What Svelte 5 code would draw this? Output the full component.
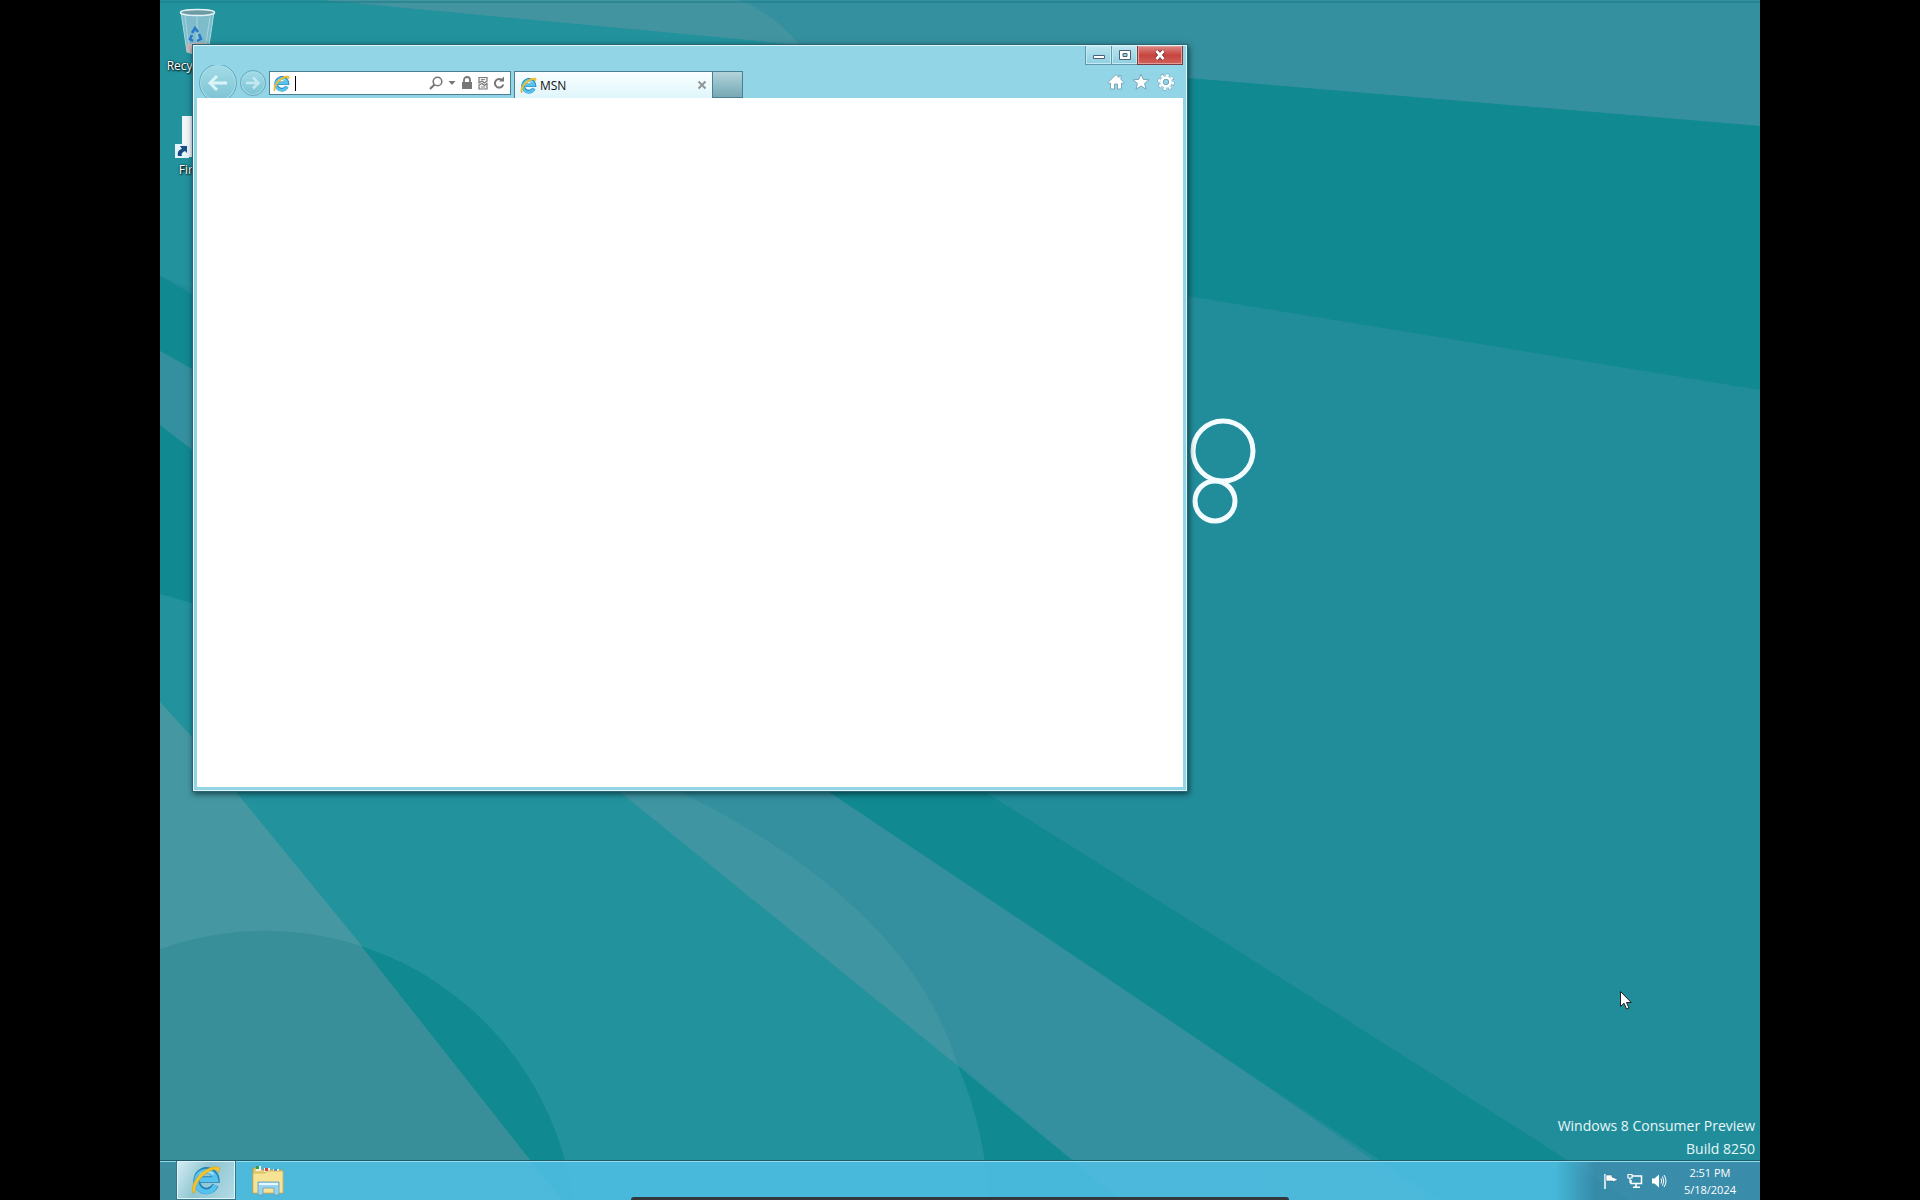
<script>
  let address = "";
  let tabs = ["MSN"];
  let time = "2:51 PM";
  let date = "5/18/2024";

  function closeTab(tab) {
    tabs = tabs.filter((t) => t !== tab);
  }

  function newTab() {
    tabs = [...tabs, "New tab"];
  }
</script>

{#snippet ieLogo()}
  <svg class="ie-logo" viewBox="0 0 32 32" aria-hidden="true">
    <path d="M26 21.500A10.500 11 0 1 1 27 15.500H9" fill="none" stroke="#2380b4" stroke-width="7" />
    <path d="M26 21.500A10.500 11 0 1 1 26.500 15.500H9" fill="none" stroke="#55c3ee" stroke-width="5" />
    <path d="M9 11A10 10 0 0 1 24 10" fill="none" stroke="#a9e7fa" stroke-width="2" />
    <path d="M2 30C-2 20 14 0 29 2C31 3 31 5 29 8C28 5 25 4 21 6C12 10 4 20 4 29Z" fill="#f5c52c" stroke="#c99513" stroke-width="0.500" />
  </svg>
{/snippet}

<main class="screen">
  <div class="desktop">
    <svg class="wallpaper" viewBox="0 0 1600 1200" preserveAspectRatio="none" aria-hidden="true">
      <rect width="1600" height="1200" fill="#228d9a" />
      <path d="M0 0H162L1000 76L600 500L0 276Z" fill="#22929d" />
      <path d="M162 0L375 20L1027 78L1600 126V0Z" fill="#34909e" />
      <path d="M162 0L375 20L640 45Q615 15 580 0Z" fill="#4294a0" />
      <path d="M1027 78L1600 126V390L1027 296L900 270V66Z" fill="#118990" />
      <path d="M0 276L32 294L400 500L825 792L1080 952L1340 1117L1470 1200H1280L1080 1068L669 792L32 369L0 351Z" fill="#118990" />
      <path d="M0 351L32 369L400 590L669 792L950 980L1080 1068L1270 1200H960L795 1062L460 792L32 450L0 425Z" fill="#34909e" />
      <path d="M0 425L32 450L460 792L795 1062L960 1200H0Z" fill="#22929d" />
      <path d="M0 425L32 450L300 680L0 594Z" fill="#118990" />
      <path d="M460 792H520Q750 905 798 1066Z" fill="#3f95a1" />
      <path d="M798 1066L960 1200H829Q825 1130 798 1066Z" fill="#118990" />
      <path d="M0 702L32 737L81 798L198 941L370 1160L402 1200H0Z" fill="#4598a2" />
      <path d="M201 946A311 311 0 0 1 413 1200H402L370 1160Z" fill="#118990" />
      <path d="M0 949A311 311 0 0 1 201 946L370 1160L402 1200H0Z" fill="#398f99" />
      <rect y="1" width="1600" height="2" fill="#1c7f88" opacity="0.600" />
      <g fill="none" stroke="#f3fdff" stroke-width="5">
        <circle cx="1063" cy="451" r="30" />
        <circle cx="1055" cy="501" r="20" />
      </g>
    </svg>

    <div class="shortcuts">
      <button class="shortcut">
        <svg viewBox="0 0 48 48" aria-hidden="true">
          <path d="M7 4L40 4L34 44Q24 48 13 44Z" fill="#7fbccb" stroke="#a9dce6" />
          <path d="M11 8L15 40M23 9L23 42M36 9L31 41" stroke="#c3e7ee" opacity="0.600" fill="none" />
          <path d="M18 25L21 20L24 24M25 26L27 31L23 33M19 33L16 31L18 27" stroke="#2a78cc" stroke-width="2.500" fill="none" />
          <path d="M12 37Q24 32 34 36L33 44Q24 48 13 44Z" fill="#c9b9b9" />
          <ellipse cx="23.500" cy="4.500" rx="17" ry="3" fill="#6d9ba5" stroke="#e4f4f6" stroke-width="1.500" />
        </svg>
        <span>Recycle Bin</span>
      </button>
      <button class="shortcut">
        <svg viewBox="0 0 48 48" aria-hidden="true">
          <path d="M8 4H38V45H8Z" fill="#f3f6f8" />
          <path d="M1 32H15V46H1Z" fill="#e6f3f8" />
          <path d="M4 44C3 39 6 37 8 37L6 34H13V41L11 39C8 40 7 42 8 44Z" fill="#164d87" />
        </svg>
        <span>Firefox</span>
      </button>
    </div>

    <section class="window" aria-label="MSN">
      <header>
        <div class="caption">
          <button aria-label="Minimize">
            <svg width="14" height="12" viewBox="0 0 14 12"><path d="M1.500 6.500H12.500V9.500H1.500Z" fill="#fff" stroke="#4d6078" /></svg>
          </button>
          <button aria-label="Maximize">
            <svg width="14" height="12" viewBox="0 0 14 12"><path d="M1.500 1.500H12.500V10.500H1.500Z" fill="#fff" stroke="#4d6078" /><path d="M5 4.500H9V7.500H5Z" fill="#91d5e6" stroke="#4d6078" /></svg>
          </button>
          <button class="close" aria-label="Close">
            <svg width="14" height="12" viewBox="0 0 14 12"><path d="M3.500 2L10.500 10M10.500 2L3.500 10" stroke="#6b2b30" stroke-width="4.500" /><path d="M3.500 2L10.500 10M10.500 2L3.500 10" stroke="#fff" stroke-width="2.800" /></svg>
          </button>
        </div>

        <div class="toolbar">
          <div class="history">
            <button class="back" aria-label="Back">
              <svg width="22" height="20" viewBox="0 0 22 20"><path d="M20 10H3M10 3L3 10L10 17" fill="none" stroke="#d9f3f9" stroke-width="3" /></svg>
            </button>
            <button class="forward" aria-label="Forward">
              <svg width="16" height="14" viewBox="0 0 16 14"><path d="M1 7H13M8 1.500L13.500 7L8 12.500" fill="none" stroke="#c3e9f2" stroke-width="2.500" /></svg>
            </button>
          </div>

          <div class="address">
            {@render ieLogo()}
            <span class="caret"></span>
            <input type="text" bind:value={address} aria-label="Address" />
            <button aria-label="Search">
              <svg width="14" height="14" viewBox="0 0 14 14"><circle cx="8.500" cy="5.500" r="4.300" fill="none" stroke="#777" stroke-width="1.600" /><path d="M5.500 8.500L1 13" stroke="#777" stroke-width="2.200" /></svg>
            </button>
            <button aria-label="Show address bar autocomplete">
              <svg width="8" height="4" viewBox="0 0 8 4"><path d="M0.500 0H7.500L4 4Z" fill="#777" /></svg>
            </button>
            <button aria-label="Security report">
              <svg width="12" height="14" viewBox="0 0 12 14"><path d="M3 7V4A3 3 0 0 1 9 4V7" fill="none" stroke="#777" stroke-width="1.800" /><path d="M1 6H11V13H1Z" fill="#777" /></svg>
            </button>
            <button aria-label="Compatibility view">
              <svg width="10" height="14" viewBox="0 0 10 14"><path d="M1 6V1.500H9V5L6.500 7L4 5L1 7ZM1 13V9L4 7.500L6.500 9.500L9 7.500V13Z" fill="#f4f4f4" stroke="#777" stroke-width="1.200" /><path d="M3 3.500H7M3 11H7" stroke="#888" /></svg>
            </button>
            <button aria-label="Refresh">
              <svg width="12" height="14" viewBox="0 0 12 14"><path d="M9.500 4.500A4.300 4.300 0 1 0 10.300 8.500" fill="none" stroke="#777" stroke-width="2" /><path d="M6 5.500H11V0.500Z" fill="#777" /></svg>
            </button>
          </div>

          <div class="tabs">
            {#each tabs as tab}
              <div class="tab">
                {@render ieLogo()}
                <span>{tab}</span>
                <button aria-label="Close tab" onclick={() => closeTab(tab)}>
                  <svg width="10" height="10" viewBox="0 0 10 10"><path d="M1.500 1.500L8.500 8.500M8.500 1.500L1.500 8.500" stroke="#909699" stroke-width="2" /></svg>
                </button>
              </div>
            {/each}
            <button class="new-tab" aria-label="New tab" onclick={newTab}></button>
          </div>

          <nav class="commands">
            <button aria-label="Home">
              <svg width="18" height="18" viewBox="0 0 18 18"><path d="M9 1.500L12 4.500V2.500H14V6.500L17 9.500L15.500 10.500L14.500 10V16H10.500V11H7.500V16H3.500V10L2.500 10.500L1 9.500Z" fill="#fff" stroke="#6b96aa" stroke-width="0.800" /></svg>
            </button>
            <button aria-label="Favorites">
              <svg width="18" height="18" viewBox="0 0 18 18"><path d="M9 1L11.200 6.400L17 6.800L12.500 10.500L14 16.200L9 13L4 16.200L5.500 10.500L1 6.800L6.800 6.400Z" fill="#fff" stroke="#6b96aa" stroke-width="0.800" /></svg>
            </button>
            <button aria-label="Tools">
              <svg width="18" height="18" viewBox="0 0 18 18">
                <circle cx="9" cy="9" r="6.800" fill="none" stroke="#6b96aa" stroke-width="3.600" stroke-dasharray="3 2.340" />
                <circle cx="9" cy="9" r="6.800" fill="none" stroke="#fff" stroke-width="2.600" stroke-dasharray="2.600 2.740" />
                <circle cx="9" cy="9" r="4.400" fill="none" stroke="#fff" stroke-width="2.800" />
                <circle cx="9" cy="9" r="2.700" fill="none" stroke="#6b96aa" stroke-width="0.800" />
              </svg>
            </button>
          </nav>
        </div>
      </header>
      <div class="page"></div>
    </section>

    <div class="watermark">
      <div>Windows 8 Consumer Preview</div>
      <div>Build 8250</div>
    </div>

    <svg class="cursor" width="12" height="19" viewBox="0 0 12 19" aria-hidden="true">
      <path d="M0.500 0.500V15.500L4 12.200L6.500 18L9 17L6.500 11.500H11.300Z" fill="#fff" stroke="#222" />
    </svg>

    <footer class="taskbar">
      <button class="task active" aria-label="Internet Explorer">
        {@render ieLogo()}
      </button>
      <button class="task" aria-label="File Explorer">
        <svg width="34" height="32" viewBox="0 0 34 32">
          <path d="M2 3H9L11 5H31V28H2Z" fill="#e9cd72" stroke="#b8964a" stroke-width="0.800" />
          <path d="M5 1H10V6H5ZM13 3H19V7H13ZM22 4H28V8H22Z" fill="#f6f3e4" />
          <path d="M5 1H8V4H5Z" fill="#2fa04b" /><path d="M14 3H17V6H14Z" fill="#d2473a" /><path d="M23 4H26V7H23Z" fill="#3a8fd0" />
          <path d="M2 8H14L17 6H32V28H2Z" fill="#f7e394" stroke="#cfae58" stroke-width="0.800" />
          <path d="M7 17H28V30H23V23H12V30H7Z" fill="#9ad3ee" stroke="#5b9fc4" stroke-width="0.800" />
          <path d="M8 19H27" stroke="#e8f8ff" stroke-width="2" />
        </svg>
      </button>
      <div class="tray">
        <button aria-label="Action Center">
          <svg width="16" height="16" viewBox="0 0 16 16"><path d="M2 1V16" stroke="#fff" stroke-width="1.500" /><path d="M3 2H9V4L15 6.500L10 9V8H3Z" fill="#fff" stroke="#25586b" stroke-width="0.500" /></svg>
        </button>
        <button aria-label="Network">
          <svg width="16" height="16" viewBox="0 0 16 16"><path d="M5 3H14.500V10.500H4V7" fill="none" stroke="#fff" stroke-width="1.500" /><path d="M9 10.500V14M6 14.300H13" stroke="#fff" stroke-width="1.500" /><path d="M1 1.500H5V5H1ZM3 5V10" fill="none" stroke="#fff" stroke-width="1.200" /></svg>
        </button>
        <button aria-label="Volume">
          <svg width="16" height="16" viewBox="0 0 16 16"><path d="M1 5.500H3.500L8 1.500V14.500L3.500 10.500H1Z" fill="#fff" /><path d="M10 5.500Q11.500 8 10 10.500M11.500 3.500Q14 8 11.500 12.500M13 2Q17 8 13 14" fill="none" stroke="#fff" /></svg>
        </button>
        <button class="clock">
          <span>{time}</span>
          <span>{date}</span>
        </button>
      </div>
      <span class="handle"></span>
    </footer>
  </div>
</main>

<style>
  :global(body) {
    background: #000;
  }

  .screen {
    display: flex;
    justify-content: center;
    height: 100vh;
    background: #000;
    font-family: "Open Sans", "Noto Sans", sans-serif;
    font-size: 12px;
    overflow: hidden;
  }

  .desktop {
    position: relative;
    display: flex;
    flex-direction: column;
    justify-content: space-between;
    aspect-ratio: 4 / 3;
    height: 100%;
    overflow: hidden;
  }

  button {
    display: flex;
    align-items: center;
    justify-content: center;
    padding: 0;
    border: none;
    background: none;
    font: inherit;
    color: inherit;
  }

  svg {
    display: block;
    flex: none;
  }

  .wallpaper {
    position: absolute;
    inset: 0;
    width: 100%;
    height: 100%;
  }

  .shortcuts {
    position: relative;
    display: flex;
    flex-direction: column;
    gap: 36px;
    width: 76px;
    padding-top: 8px;
    flex: 1;
  }

  .shortcut {
    flex-direction: column;
    line-height: 20px;
    color: #fff;
    text-shadow: 1px 1px 2px #000, 0 0 2px #000;
    white-space: nowrap;
  }

  .shortcut svg {
    width: 48px;
    height: 48px;
  }

  /* Browser window */
  .window {
    position: absolute;
    top: 45px;
    left: 33px;
    display: flex;
    flex-direction: column;
    box-sizing: border-box;
    width: calc(62% + 2px);
    height: calc(62% + 2px);
    padding: 0 3px 3px;
    border: 1px solid #dcf6fb;
    background: #91d5e6;
    box-shadow: 0 0 0 1px #2c6470, 1px 2px 6px 1px rgba(0, 30, 40, 0.7);
  }

  .caption {
    display: flex;
    justify-content: flex-end;
    height: 19px;
  }

  .caption button {
    width: 27px;
    border: 1px solid #6398aa;
    border-top: none;
    margin-left: -1px;
    background: linear-gradient(#b9e5ef, #8fd0e0);
    box-shadow: inset 0 0 0 1px #c4eaf2;
  }

  .caption .close {
    width: 46px;
    border-color: #7b3c42;
    background: linear-gradient(#dc8a86, #c9443f 50%, #d0615a);
    box-shadow: inset 0 0 0 1px #e79b95;
  }

  .toolbar {
    display: flex;
    align-items: flex-end;
    height: 33px;
    overflow: hidden;
  }

  .history {
    display: flex;
    align-items: center;
    gap: 3px;
    box-sizing: border-box;
    width: 72px;
    height: 33px;
    padding: 2px 0 0 2px;
  }

  .history button {
    box-sizing: border-box;
    flex: none;
    border: 1px solid #69a8b9;
    border-radius: 50%;
    background: linear-gradient(#a4dbe7, #7cc3d3);
    box-shadow: inset 0 0 0 1px #a6dfeb;
  }

  .back {
    width: 38px;
    height: 38px;
  }

  .forward {
    width: 26px;
    height: 26px;
  }

  .address {
    display: flex;
    align-items: center;
    gap: 5px;
    box-sizing: border-box;
    width: 242px;
    height: 24px;
    margin-bottom: 3px;
    padding: 0 5px 0 3px;
    border: 1px solid #4b7f92;
    background: #fff;
  }

  .address input {
    flex: 1;
    min-width: 0;
    padding: 0;
    border: none;
    outline: none;
    font: inherit;
  }

  .address .ie-logo,
  .tab .ie-logo {
    width: 17px;
    height: 17px;
  }

  .caret {
    width: 1px;
    height: 15px;
    background: #000;
  }

  .tabs {
    display: flex;
    height: 27px;
    margin-left: 3px;
  }

  .tab {
    display: flex;
    align-items: center;
    gap: 3px;
    box-sizing: border-box;
    width: 199px;
    padding: 0 5px;
    border: 1px solid #4b7f92;
    border-bottom: none;
    background: linear-gradient(#fafeff, #dff6fb);
    color: #111;
  }

  .tab span {
    flex: 1;
  }

  .new-tab {
    box-sizing: border-box;
    width: 30px;
    border: 1px solid #4b7f92;
    border-left: none;
    background: linear-gradient(#b4d3db, #8bb9c4 60%, #79a9b5);
  }

  .commands {
    display: flex;
    align-items: center;
    gap: 7px;
    height: 33px;
    margin-left: auto;
    padding-right: 8px;
  }

  .page {
    flex: 1;
    background: #fff;
  }

  .watermark {
    position: relative;
    padding: 0 5px 0 0;
    font-size: 14px;
    line-height: 23px;
    color: #e6f7f9;
    text-align: right;
  }

  .cursor {
    position: absolute;
    top: 991px;
    left: 1460px;
  }

  /* Taskbar */
  .taskbar {
    position: relative;
    display: flex;
    box-sizing: border-box;
    height: 40px;
    padding-left: 16px;
    border-top: 1px solid #1d5b6b;
    box-shadow: inset 0 1px #8fdfee;
    background: linear-gradient(
      to right,
      rgba(64, 140, 165, 0.5) 16px,
      rgba(80, 192, 230, 0.85) 17px,
      rgba(80, 192, 230, 0.85) calc(100% - 205px),
      rgba(68, 140, 178, 0.7) calc(100% - 165px)
    );
  }

  .task {
    box-sizing: border-box;
    width: 60px;
    margin-right: 2px;
  }

  .task.active {
    border: 1px solid #36758a;
    border-top: none;
    background: linear-gradient(120deg, #d5eef4, #8fc5d1 45%, #b4dce6);
    box-shadow: inset 0 0 0 1px #dff5fa;
  }

  .task .ie-logo {
    width: 30px;
    height: 30px;
  }

  .tray {
    display: flex;
    align-items: center;
    gap: 8px;
    margin-left: auto;
    padding-right: 24px;
    color: #fff;
  }

  .clock {
    flex-direction: column;
    margin-left: 9px;
    font-size: 11px;
    line-height: 17px;
  }

  /* Edge of the hidden panel at the bottom of the screen */
  .handle {
    position: absolute;
    bottom: 0;
    left: 471px;
    width: 658px;
    height: 3px;
    border-radius: 4px 4px 0 0;
    background: #33383c;
  }
</style>
